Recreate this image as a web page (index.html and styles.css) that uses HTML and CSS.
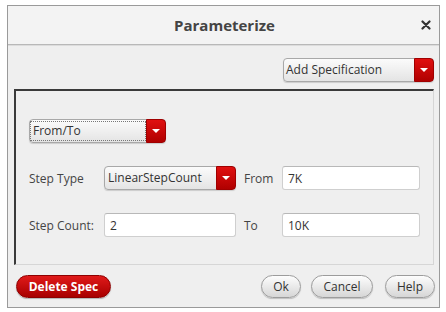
FILE: index.html
```html
<!DOCTYPE html>
<html lang="en">
<head>
    <meta charset="UTF-8">
    <title>Parameterize</title>
    <link rel="stylesheet" href="styles.css">
</head>
<body>

<div class="dialog">
    <!-- Title bar -->
    <div class="titlebar">
        <span class="title">Parameterize</span>
        <svg class="close" width="10" height="10" viewBox="0 0 10 10">
            <path d="M1.5 1.5 L8.5 8.5 M8.5 1.5 L1.5 8.5" stroke="#333" stroke-width="2.2" stroke-linecap="round"/>
        </svg>
    </div>

    <div class="content">
        <div class="top-row">
            <div class="combo combo-add">
                <span class="combo-text">Add Specification</span>
                <span class="combo-arrow"></span>
            </div>
        </div>

        <!-- Spec panel -->
        <div class="spec-panel">
            <div class="combo combo-mode">
                <span class="combo-text focused">From/To</span>
                <span class="combo-arrow"></span>
            </div>

            <div class="spec-grid">
                <span class="label">Step Type</span>
                <div class="combo combo-type">
                    <span class="combo-text">LinearStepCount</span>
                    <span class="combo-arrow"></span>
                </div>
                <span class="label">From</span>
                <input class="field" type="text" value="7K">

                <span class="label">Step Count:</span>
                <input class="field field-count" type="text" value="2">
                <span class="label">To</span>
                <input class="field" type="text" value="10K">
            </div>
        </div>

        <!-- Buttons -->
        <div class="button-row">
            <button class="btn btn-danger">Delete Spec</button>
            <div class="right-buttons">
                <button class="btn btn-ok">Ok</button>
                <button class="btn btn-cancel">Cancel</button>
                <button class="btn btn-help">Help</button>
            </div>
        </div>
    </div>
</div>

</body>
</html>
```

FILE: styles.css
```css
body {
    margin: 0;
    background: #fff;
    font-family: "Open Sans", "DejaVu Sans", sans-serif;
    font-size: 12px;
    color: #444;
}
.dialog {
    margin: 5px 0 0 7px;
    width: 433px;
    height: 303px;
    box-sizing: border-box;
    border: 1px solid #9a9a9a;
    background: #efefef;
}
.titlebar {
    position: relative;
    height: 38px;
    background: #f3f3f3;
    border-bottom: 1px solid #b8b8b8;
    box-shadow: 0 1px 0 #dcdcdc;
    display: flex;
    align-items: center;
    justify-content: center;
}
.title {
    font-size: 15px;
    font-weight: bold;
    color: #444;
    margin-left: 2px;
}
.close {
    position: absolute;
    right: 8px;
    top: 14px;
}
.content {
    padding: 0 5px 0 6px;
}
.top-row {
    display: flex;
    justify-content: flex-end;
    padding-top: 13px;
}

/* combo boxes */
.combo {
    display: flex;
    height: 24px;
    box-sizing: border-box;
    border: 1px solid #a8a8a8;
    border-radius: 4px;
    background: linear-gradient(#fbfbfb, #e4e4e4);
    box-shadow: 0 1px 1px rgba(0, 0, 0, 0.15);
}
.combo-text {
    flex: 1;
    padding-left: 2px;
    line-height: 22px;
    color: #333;
    white-space: nowrap;
}
.combo-text.focused {
    margin: 2px 1px 2px 1px;
    line-height: 18px;
    outline: 1px dotted #777;
}
.combo-arrow {
    position: relative;
    width: 18px;
    margin: -1px -1px -1px 0;
    border-radius: 0 4px 4px 0;
    background: linear-gradient(#e01010, #b00000);
    border: 1px solid #a00000;
}
.combo-arrow::after {
    content: "";
    position: absolute;
    left: 5px;
    top: 9px;
    border-left: 4px solid transparent;
    border-right: 4px solid transparent;
    border-top: 4px solid #fff;
}
.combo-add {
    width: 151px;
}
.combo-mode {
    width: 137px;
}
.combo-type {
    width: 132px;
}
.combo-type .combo-text {
    padding-left: 3px;
}

/* panel */
.spec-panel {
    margin-top: 7px;
    height: 176px;
    box-sizing: border-box;
    border-top: 2px solid #3a3a3a;
    border-left: 2px solid #3a3a3a;
    border-right: 1px solid #d6d6d6;
    border-bottom: 1px solid #d6d6d6;
    padding: 28px 0 0 13px;
}
.spec-grid {
    display: grid;
    grid-template-columns: 75px 140px 38px 138px;
    grid-auto-rows: 24px;
    row-gap: 23px;
    margin-top: 23px;
    align-items: center;
}
.label {
    color: #444;
}
.field {
    height: 24px;
    width: 138px;
    box-sizing: border-box;
    border: 1px solid #cfcfcf;
    border-top-color: #b8b8b8;
    border-radius: 3px;
    background: #fff;
    padding: 0 5px;
    font-family: inherit;
    font-size: 12px;
    color: #333;
    outline: none;
}
.field-count {
    width: 132px;
}

/* buttons */
.button-row {
    display: flex;
    justify-content: space-between;
    align-items: center;
    margin-top: 10px;
    padding-left: 2px;
}
.right-buttons {
    display: flex;
    margin-right: -1px;
}
.btn {
    height: 23px;
    box-sizing: border-box;
    border-radius: 12px;
    font-family: inherit;
    font-size: 12px;
    padding: 0;
    cursor: pointer;
}
.btn-danger {
    width: 95px;
    border: 1px solid #8e0000;
    background: linear-gradient(#e01a1a, #a80000);
    color: #fff;
    font-weight: bold;
    box-shadow: 0 1px 1px rgba(0, 0, 0, 0.25);
}
.btn-ok, .btn-cancel, .btn-help {
    border: 1px solid #9c9c9c;
    background: linear-gradient(#fdfdfd, #d6d6d6);
    color: #333;
    box-shadow: 0 1px 1px rgba(0, 0, 0, 0.2);
}
.btn-ok {
    width: 40px;
}
.btn-cancel {
    width: 62px;
    margin-left: 10px;
}
.btn-help {
    width: 50px;
    margin-left: 12px;
}
```
